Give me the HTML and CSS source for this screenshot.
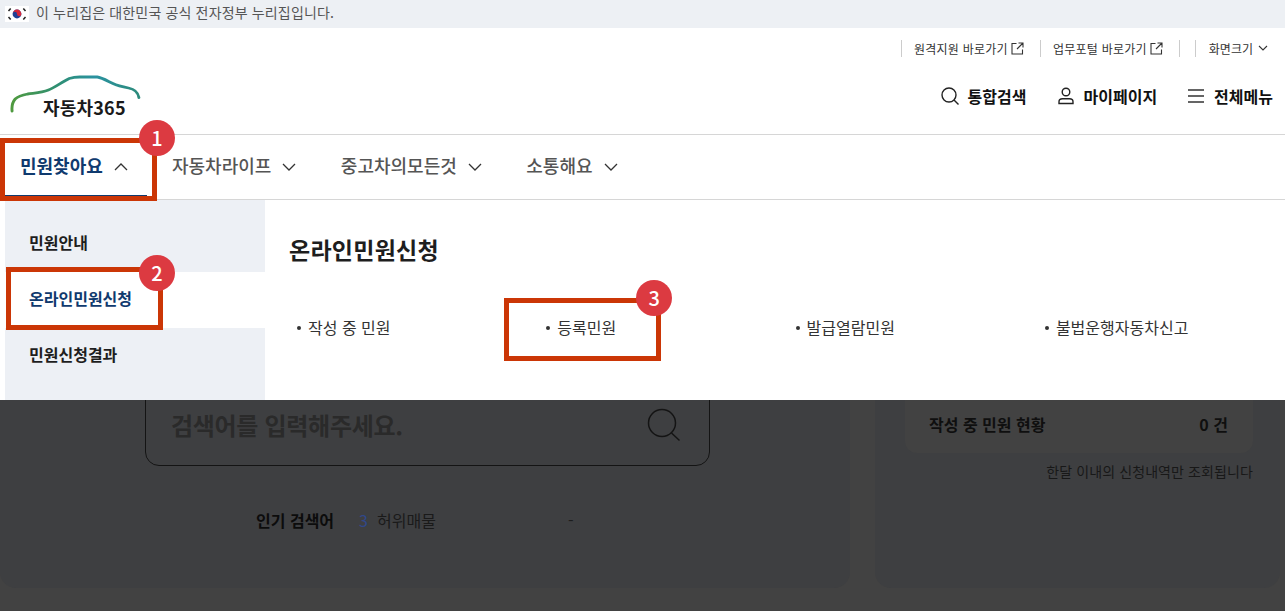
FILE: index.html
```html
<!DOCTYPE html>
<html lang="ko">
<head>
<meta charset="utf-8">
<title>자동차365</title>
<link rel="stylesheet" href="styles.css">
</head>
<body>
<div class="gov-banner">
  <svg class="flag" viewBox="0 0 24 16" width="24" height="16" aria-hidden="true">
    <rect width="24" height="16" fill="#fff"/>
    <circle cx="12" cy="8" r="4.400" fill="#1f3f94"/>
    <path d="M7.600 8a4.400 4.400 0 0 1 8.800 0a2.200 2.200 0 0 1-4.400 0a2.200 2.200 0 0 0-4.400 0z" fill="#d5263a"/>
    <g stroke="#222" stroke-width="1.500">
      <path d="M3.500 5l2.200-2.400"/><path d="M18.300 2.600l2.200 2.400"/><path d="M3.500 11l2.200 2.400"/><path d="M18.300 13.400l2.200-2.400"/>
    </g>
  </svg>
  <span class="gov-text">이 누리집은 대한민국 공식 전자정부 누리집입니다.</span>
</div>

<header class="header">
  <div class="util">
    <a class="util-link">원격지원 바로가기
      <svg class="ext" viewBox="0 0 13 13" width="13" height="13" aria-hidden="true"><path d="M5.500 1.500H1v10.500h10.500V7.500M7.500 1H12v4.500M12 1L6 7" fill="none" stroke="#333" stroke-width="1.100"/></svg>
    </a>
    <a class="util-link">업무포털 바로가기
      <svg class="ext" viewBox="0 0 13 13" width="13" height="13" aria-hidden="true"><path d="M5.500 1.500H1v10.500h10.500V7.500M7.500 1H12v4.500M12 1L6 7" fill="none" stroke="#333" stroke-width="1.100"/></svg>
    </a>
    <span class="util-gap"></span>
    <a class="util-link util-size">화면크기
      <svg viewBox="0 0 10 6" width="10" height="6" aria-hidden="true"><path d="M1 1l4 4 4-4" fill="none" stroke="#333" stroke-width="1.100"/></svg>
    </a>
  </div>
  <div class="brand-row">
    <div class="logo">
      <svg class="logo-car" viewBox="1 0 127 42" width="132" height="42" preserveAspectRatio="none" aria-hidden="true">
        <defs><linearGradient id="car" x1="0" x2="1" y1="0" y2="0"><stop offset="0" stop-color="#4f9a3f"/><stop offset=".35" stop-color="#2f8f72"/><stop offset=".65" stop-color="#2a92a0"/><stop offset="1" stop-color="#2d8b7c"/></linearGradient></defs>
        <path d="M3 40c-.5-5 .5-9 3-12 3-3 7-4 12-5 6-1 13-1 20-4 6-2.500 13-8 20-11.500 3-1 6-1.500 10-1.500h17c4 .5 9 3.500 15 6.500 5 2.500 10 3.500 15 4.500 5 1 9 3.500 10 9.500" fill="none" stroke="url(#car)" stroke-width="2.800" stroke-linecap="round"/>
      </svg>
      <span class="logo-text">자동차365</span>
    </div>
    <nav class="quick">
      <a class="quick-item">
        <svg viewBox="0 0 20 20" width="20" height="20" aria-hidden="true"><circle cx="9" cy="9" r="7" fill="none" stroke="#222" stroke-width="1.400"/><path d="M14 14l4.500 4.500" stroke="#222" stroke-width="1.400"/></svg>
        통합검색</a>
      <a class="quick-item">
        <svg viewBox="0 0 20 20" width="20" height="20" aria-hidden="true"><circle cx="10" cy="6" r="3.800" fill="none" stroke="#222" stroke-width="1.400"/><path d="M3 17.500v-1.800c0-1.700 1.500-3 3.500-3h7c2 0 3.500 1.300 3.500 3v1.800z" fill="none" stroke="#222" stroke-width="1.400"/></svg>
        마이페이지</a>
      <a class="quick-item">
        <svg viewBox="0 0 20 20" width="20" height="20" aria-hidden="true"><path d="M2 4h16M2 10h16M2 16h16" stroke="#333" stroke-width="1.400"/></svg>
        전체메뉴</a>
    </nav>
  </div>
</header>

<nav class="gnb">
  <a class="gnb-item is-open">민원찾아요
    <svg viewBox="0 0 14 8" width="14" height="8" aria-hidden="true"><path d="M1 7l6-6 6 6" fill="none" stroke="#333" stroke-width="1.300"/></svg>
  </a>
  <a class="gnb-item">자동차라이프
    <svg viewBox="0 0 14 8" width="14" height="8" aria-hidden="true"><path d="M1 1l6 6 6-6" fill="none" stroke="#333" stroke-width="1.300"/></svg>
  </a>
  <a class="gnb-item">중고차의모든것
    <svg viewBox="0 0 14 8" width="14" height="8" aria-hidden="true"><path d="M1 1l6 6 6-6" fill="none" stroke="#333" stroke-width="1.300"/></svg>
  </a>
  <a class="gnb-item">소통해요
    <svg viewBox="0 0 14 8" width="14" height="8" aria-hidden="true"><path d="M1 1l6 6 6-6" fill="none" stroke="#333" stroke-width="1.300"/></svg>
  </a>
  <span class="mark mark-1"><b class="badge">1</b></span>
</nav>

<section class="mega">
  <aside class="side">
    <a class="side-item">민원안내</a>
    <a class="side-item is-active">온라인민원신청<span class="mark mark-2"><b class="badge">2</b></span></a>
    <a class="side-item">민원신청결과</a>
  </aside>
  <div class="panel">
    <h2 class="panel-title">온라인민원신청</h2>
    <ul class="panel-list">
      <li>작성 중 민원</li>
      <li>등록민원<span class="mark mark-3"><b class="badge">3</b></span></li>
      <li>발급열람민원</li>
      <li>불법운행자동차신고</li>
    </ul>
  </div>
</section>

<main class="dim">
  <section class="card card-left">
    <div class="search">
      <span class="search-text">검색어를 입력해주세요.</span>
      <svg class="search-icon" viewBox="0 0 34 34" width="34" height="34" aria-hidden="true"><circle cx="15" cy="15" r="13.500" fill="none" stroke="#141414" stroke-width="1.500"/><path d="M24.500 25l8 7.500" stroke="#141414" stroke-width="1.500"/></svg>
    </div>
    <div class="popular">
      <strong>인기 검색어</strong>
      <span class="rank">3</span>
      <span class="term">허위매물</span>
      <span class="dash">-</span>
    </div>
  </section>
  <section class="card card-right">
    <div class="status">
      <strong>작성 중 민원 현황</strong>
      <strong>0 건</strong>
    </div>
    <p class="note">한달 이내의 신청내역만 조회됩니다</p>
  </section>
</main>
</body>
</html>
```
FILE: styles.css
```css
* { box-sizing: border-box; }
html, body { margin: 0; padding: 0; }
body {
  width: 1285px;
  height: 611px;
  overflow: hidden;
  background: #fff;
  color: #1e1e1e;
  font-family: "Noto Sans CJK KR", "Noto Sans", sans-serif;
}
a { color: inherit; text-decoration: none; }

.gov-banner {
  height: 28px;
  background: #edf0f4;
  display: flex;
  align-items: center;
  gap: 7px;
  padding-left: 5px;
  font-size: 14px;
  letter-spacing: .15px;
  color: #555;
}
.flag { flex: none; }
.gov-text { padding-bottom: 4px; }

.header { height: 107px; border-bottom: 1px solid #d6d6d6; display: flex; flex-direction: column; }
.util {
  display: flex;
  justify-content: flex-end;
  align-items: center;
  height: 40px;
  padding-right: 17px;
  font-size: 12px;
  letter-spacing: .25px;
  color: #333;
}
.util-link {
  display: flex;
  align-items: center;
  gap: 3px;
  height: 17px;
  padding: 0 16px 0 12px;
  border-left: 1px solid #ccc;
}
.util-gap { width: 16px; height: 17px; border-left: 1px solid #ccc; }
.util-size { gap: 5px; padding: 0 0 0 13px; letter-spacing: 0; }

.brand-row { flex: 1; display: flex; justify-content: space-between; align-items: flex-start; padding: 0 12px 0 10px; }
.logo { width: 132px; margin-top: 3px; display: flex; flex-direction: column; align-items: flex-start; }
.logo-car { display: block; flex: none; }
.logo-text { margin: -17px 0 0 33px; font-size: 18px; font-weight: 700; color: #1a1a1a; line-height: 22px; letter-spacing: .2px; white-space: nowrap; }
.quick { display: flex; gap: 29px; margin-top: 16px; }
.quick-item { display: flex; align-items: center; gap: 8px; font-size: 16px; font-weight: 700; color: #111; line-height: 24px; }

.gnb {
  position: relative;
  height: 65px;
  display: flex;
  align-items: flex-start;
  background: #fff;
  border-bottom: 1px solid #d6d6d6;
  padding-left: 5px;
  font-size: 18px;
  font-weight: 500;
  color: #555;
}
.gnb-item { display: flex; align-items: center; gap: 11px; height: 64px; padding: 0 15px 4px; margin-right: 14.5px; }
.gnb-item svg { margin-top: 4px; }
.gnb-item.is-open { color: #0f3a6e; font-weight: 700; height: 62px; padding: 0 15px; border-bottom: 2px solid #0f3a6e; margin-right: 0; width: 142px; }
.gnb-item:nth-child(2) { margin-left: 10px; }

.mega { display: flex; height: 200px; padding-left: 5px; background: #fff; }
.side { flex: none; width: 260px; background: #edf0f5; padding-top: 16px; display: flex; flex-direction: column; }
.side-item { position: relative; display: flex; align-items: center; height: 56px; padding: 0 0 5px 24px; font-size: 16px; font-weight: 700; color: #1e1e1e; }
.side-item.is-active { background: #fff; color: #0f3a6e; }
.panel { flex: 1; min-width: 0; padding: 31px 0 0 24px; }
.panel-title { margin: 0; font-size: 23px; letter-spacing: .25px; font-weight: 700; line-height: 36px; color: #1e1e1e; }
.panel-list { list-style: none; margin: 48px 0 0; padding: 0; display: flex; font-size: 16px; color: #333; line-height: 24px; }
.panel-list li { position: relative; flex: none; width: 249.3px; padding-left: 19px; }
.panel-list li::before {
  content: "";
  position: absolute;
  left: 8px;
  top: 11px;
  width: 4px;
  height: 4px;
  border-radius: 50%;
  background: #333;
}

.mark { position: absolute; display: block; width: 157px; height: 63px; border: 5px solid #cb3606; pointer-events: none; }
.mark-1 { left: 0; top: 3px; }
.mark-2 { left: 1px; top: -5px; }
.mark-3 { left: -34px; top: -17px; }
.badge {
  position: absolute;
  width: 36px;
  height: 36px;
  border-radius: 50%;
  background: #dc3a41;
  color: #fff;
  font-size: 20px;
  font-weight: 500;
  line-height: 36px;
  text-align: center;
}
.mark-1 .badge { right: -23px; top: -23px; }
.mark-2 .badge { right: -17px; top: -17px; }
.mark-3 .badge { right: -16px; top: -23px; }

.dim {
  height: 211px;
  overflow: hidden;
  background: #424242;
  display: flex;
  justify-content: space-between;
  align-items: flex-start;
}
.card { height: 188px; background: #3e3f41; border-radius: 0 0 16px 16px; }
.card-left { width: 850px; padding-left: 145px; }
.card-right { width: 405px; margin-right: 5px; padding: 0 27px 0 30px; }
.search {
  width: 565px;
  height: 81px;
  margin-top: -15px;
  padding: 0 28px 0 25px;
  border: 1px solid #141414;
  border-radius: 14px;
  display: flex;
  align-items: center;
  justify-content: space-between;
}
.search-text { padding-bottom: 3px; font-size: 24px; letter-spacing: -.3px; font-weight: 700; color: #2a2a2a; }
.search-icon { margin-top: -2px; }
.popular { display: flex; align-items: center; margin: 40px 0 0 111px; font-size: 16px; line-height: 28px; color: #1d1d1d; }
.popular strong { color: #0c0c0c; width: 103px; font-weight: 700; }
.rank { width: 18px; color: #30488a; }
.term { width: 191px; color: #1a1a1a; }
.status {
  display: flex;
  justify-content: space-between;
  align-items: center;
  height: 55px;
  margin-top: -2px;
  padding: 0 25px 3px 24px;
  border-radius: 0 0 12px 12px;
  background: #424242;
  font-size: 16px;
  color: #0f0f0f;
}
.note { margin: 6px 0 0; text-align: right; font-size: 14px; letter-spacing: .1px; line-height: 24px; color: #181818; }
```
